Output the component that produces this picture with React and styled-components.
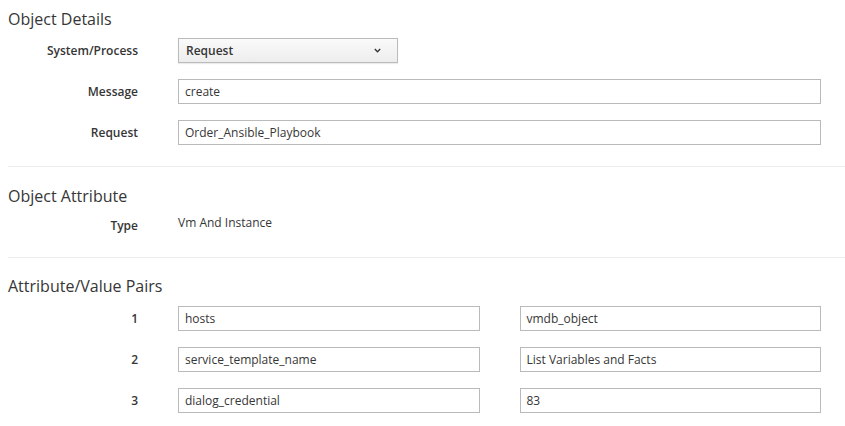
import React from "react";
import styled, { createGlobalStyle } from "styled-components";

const Global = createGlobalStyle`
  html, body { margin: 0; padding: 0; background: #fff; }
  body { font-family: "Open Sans", "Liberation Sans", sans-serif; color: #363636; }
  * { box-sizing: border-box; }
`;

const Page = styled.div`
  padding: 9px 0 0 8px;
  width: 845px;
`;

const Section = styled.section`
  padding-right: 24px;
`;

const Heading = styled.h3`
  margin: ${(p) => p.$mt || 0}px 0 0;
  font-size: 16px;
  line-height: 20px;
  font-weight: 400;
  color: #363636;
`;

const Rows = styled.div`
  display: flex;
  flex-direction: column;
  gap: 16px;
  margin-top: ${(p) => p.$mt || 9}px;
`;

const Row = styled.div`
  display: grid;
  grid-template-columns: 130px 1fr;
  column-gap: 40px;
  align-items: ${(p) => (p.$top ? "start" : "center")};
  min-height: ${(p) => (p.$top ? "auto" : "25px")};
`;

const Label = styled.div`
  text-align: right;
  font-size: 12px;
  line-height: 18px;
  font-weight: 600;
  color: #363636;
  padding-top: ${(p) => p.$pt || 0}px;
`;

const Value = styled.div`
  font-size: 12px;
  line-height: 18px;
  color: #363636;
`;

const Pair = styled.div`
  display: grid;
  grid-template-columns: 1fr 1fr;
  column-gap: 40px;
`;

const Input = styled.div`
  height: 25px;
  border: 1px solid #bababa;
  background: #fff;
  padding: 0 6px;
  font-size: 12px;
  line-height: 23px;
  color: #363636;
  white-space: nowrap;
  overflow: hidden;
`;

const Select = styled.div`
  width: 220px;
  height: 25px;
  border: 1px solid #bbb;
  background: linear-gradient(#fafafa, #ededed);
  box-shadow: 0 1px 1px rgba(3, 3, 3, 0.08);
  padding: 0 16px 0 7px;
  display: flex;
  align-items: center;
  justify-content: space-between;
  font-size: 12px;
  font-weight: 600;
  color: #363636;
`;

const Divider = styled.hr`
  margin: ${(p) => p.$mt}px 0 0;
  border: 0;
  border-top: 1px solid #ededed;
  height: 0;
`;

const Chevron = () => (
  <svg width="7" height="5" viewBox="0 0 7 5">
    <polyline points="0.8,1 3.5,3.7 6.2,1" fill="none" stroke="#363636" strokeWidth="1.4" />
  </svg>
);

const pairs = [
  ["1", "hosts", "vmdb_object"],
  ["2", "service_template_name", "List Variables and Facts"],
  ["3", "dialog_credential", "83"],
];

export default function App() {
  return (
    <Page>
      <Global />
      <Section>
        <Heading>Object Details</Heading>
        <Rows>
          <Row>
            <Label>System/Process</Label>
            <Select>
              <span>Request</span>
              <Chevron />
            </Select>
          </Row>
          <Row>
            <Label>Message</Label>
            <Input>create</Input>
          </Row>
          <Row>
            <Label>Request</Label>
            <Input>Order_Ansible_Playbook</Input>
          </Row>
        </Rows>
      </Section>
      <Divider $mt={21} />
      <Section>
        <Heading $mt={19}>Object Attribute</Heading>
        <Rows $mt={8}>
          <Row $top>
            <Label $pt={3}>Type</Label>
            <Value>Vm And Instance</Value>
          </Row>
        </Rows>
      </Section>
      <Divider $mt={22} />
      <Section>
        <Heading $mt={18}>Attribute/Value Pairs</Heading>
        <Rows $mt={10}>
          {pairs.map(([n, a, v]) => (
            <Row key={n}>
              <Label>{n}</Label>
              <Pair>
                <Input>{a}</Input>
                <Input>{v}</Input>
              </Pair>
            </Row>
          ))}
        </Rows>
      </Section>
    </Page>
  );
}
